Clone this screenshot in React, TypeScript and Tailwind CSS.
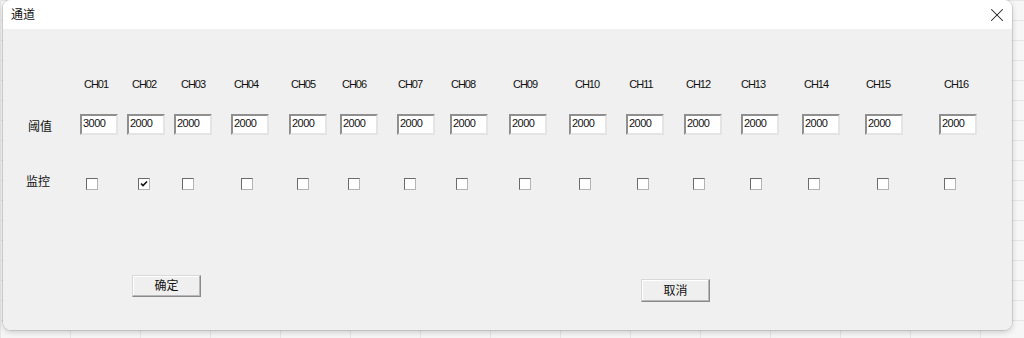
import { X } from "lucide-react";

const cjk = "font-['Liberation_Sans','Noto_Sans_CJK_SC',sans-serif]";

// each channel: margins for label, input, checkbox rows (gaps from the previous item)
const channels = [
  { name: "CH01", value: "3000", lm: "ml-[73px]", im: "ml-[28px]", cm: "ml-[36px]", checked: false },
  { name: "CH02", value: "2000", lm: "ml-[8px]", im: "ml-[9px]", cm: "ml-[40px]", checked: true },
  { name: "CH03", value: "2000", lm: "ml-[9px]", im: "ml-[9px]", cm: "ml-[32px]", checked: false },
  { name: "CH04", value: "2000", lm: "ml-[13px]", im: "ml-[19px]", cm: "ml-[47px]", checked: false },
  { name: "CH05", value: "2000", lm: "ml-[17px]", im: "ml-[20px]", cm: "ml-[44px]", checked: false },
  { name: "CH06", value: "2000", lm: "ml-[11px]", im: "ml-[13px]", cm: "ml-[39px]", checked: false },
  { name: "CH07", value: "2000", lm: "ml-[16px]", im: "ml-[19px]", cm: "ml-[44px]", checked: false },
  { name: "CH08", value: "2000", lm: "ml-[13px]", im: "ml-[15px]", cm: "ml-[40px]", checked: false },
  { name: "CH09", value: "2000", lm: "ml-[22px]", im: "ml-[21px]", cm: "ml-[51px]", checked: false },
  { name: "CH10", value: "2000", lm: "ml-[22px]", im: "ml-[22px]", cm: "ml-[48px]", checked: false },
  { name: "CH11", value: "2000", lm: "ml-[14px]", im: "ml-[19px]", cm: "ml-[46px]", checked: false },
  { name: "CH12", value: "2000", lm: "ml-[17px]", im: "ml-[20px]", cm: "ml-[44px]", checked: false },
  { name: "CH13", value: "2000", lm: "ml-[15px]", im: "ml-[19px]", cm: "ml-[45px]", checked: false },
  { name: "CH14", value: "2000", lm: "ml-[23px]", im: "ml-[23px]", cm: "ml-[46px]", checked: false },
  { name: "CH15", value: "2000", lm: "ml-[22px]", im: "ml-[25px]", cm: "ml-[57px]", checked: false },
  { name: "CH16", value: "2000", lm: "ml-[38px]", im: "ml-[36px]", cm: "ml-[55px]", checked: false },
];

const CheckBox = ({ checked, className }: { checked: boolean; className: string }) => (
  <div
    className={`${className} mt-[3px] w-[12px] h-[12px] shrink-0 bg-white border border-t-[#6a6a6a] border-l-[#6a6a6a] border-r-[#b4b4b4] border-b-[#b4b4b4] flex items-center justify-center`}
  >
    {checked && (
      <svg width="8" height="8" viewBox="0 0 8 8">
        <path d="M1 3.5 L3 5.5 L7 1.5" stroke="#111" strokeWidth="1.6" fill="none" />
      </svg>
    )}
  </div>
);

const DlgButton = ({ label, className }: { label: string; className: string }) => (
  <div
    className={`${className} w-[69px] shrink-0 bg-[#efefef] border border-t-[#d8d8d8] border-l-[#d8d8d8] border-r-[#8a8a8a] border-b-[#8a8a8a] shadow-[inset_-1px_-1px_0_#b8b8b8,inset_1px_1px_0_#ffffff] flex items-center justify-center text-[12px] text-[#111] ${cjk}`}
  >
    {label}
  </div>
);

export default function App() {
  return (
    <div className="w-[1024px] h-[338px] bg-[#f6f6f6] bg-[linear-gradient(#e6e6e6_1px,transparent_1px),linear-gradient(90deg,#e6e6e6_1px,transparent_1px)] bg-[size:70px_20px] overflow-hidden">
      <div className="ml-[3px] w-[1009px] h-[330px] rounded-lg flex flex-col overflow-hidden shadow-[0_0_0_1px_rgba(0,0,0,0.1),0_2px_6px_rgba(0,0,0,0.18)]">
        <div className="h-[29px] bg-white flex items-center justify-between pl-[8px] pr-[4px]">
          <span className={`text-[12px] text-[#111] ${cjk}`}>通道</span>
          <X className="w-[22px] h-[22px] text-[#222]" strokeWidth={1.1} />
        </div>
        <div className="flex-1 bg-[#f0f0f0] pt-[48px] font-['Liberation_Sans',sans-serif] text-[#111]">
          <div className="flex h-[14px]">
            {channels.map((c) => (
              <div
                key={c.name}
                className={`${c.lm} w-[40px] shrink-0 text-center text-[11px] leading-[14px] tracking-[-1px]`}
              >
                {c.name}
              </div>
            ))}
          </div>

          <div className="flex items-start mt-[23px]">
            <div className={`ml-[25px] w-[24px] shrink-0 mt-[6px] text-[12px] leading-[14px] ${cjk}`}>阈值</div>
            {channels.map((c) => (
              <div
                key={c.name}
                className={`${c.im} w-[38px] h-[21px] shrink-0 bg-white border-2 border-t-[#8f8f8f] border-l-[#8f8f8f] border-r-[#e4e4e4] border-b-[#e4e4e4] pl-[1px] text-[11px] leading-[14px] tracking-[-0.5px]`}
              >
                {c.value}
              </div>
            ))}
          </div>

          <div className="flex items-start mt-[40px]">
            <div className={`ml-[23px] w-[24px] shrink-0 text-[12px] leading-[14px] ${cjk}`}>监控</div>
            {channels.map((c) => (
              <CheckBox key={c.name} checked={c.checked} className={c.cm} />
            ))}
          </div>

          <div className="flex items-start mt-[85px]">
            <DlgButton label="确定" className="ml-[129px] h-[22px]" />
            <DlgButton label="取消" className="ml-[440px] mt-[4px] h-[23px]" />
          </div>
        </div>
      </div>
    </div>
  );
}
